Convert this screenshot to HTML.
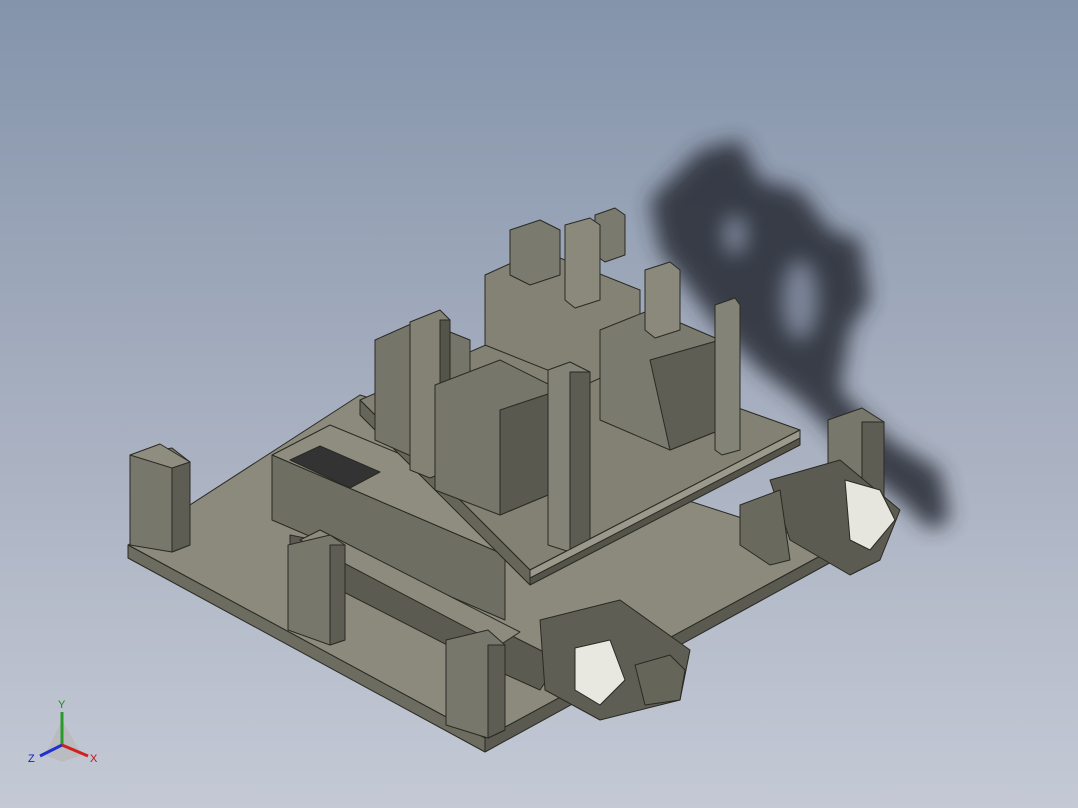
<!DOCTYPE html>
<html><head><style>
html,body{margin:0;padding:0;width:1078px;height:808px;overflow:hidden}
body{background:linear-gradient(180deg,#8494ab 0%,#a3acbd 45%,#c4c9d5 100%);font-family:"Liberation Sans",sans-serif}
svg{position:absolute;left:0;top:0}
</style></head><body>
<svg width="1078" height="808" viewBox="0 0 1078 808">
<defs><filter id="b" x="-30%" y="-30%" width="160%" height="160%"><feGaussianBlur stdDeviation="10"/></filter></defs>
<g filter="url(#b)" fill="#2b2f37" opacity="0.88">
<polygon points="700,150 740,140 760,180 800,190 830,230 860,240 870,300 850,330 840,390 860,410 890,440 940,470 950,520 930,530 900,500 860,470 830,430 800,400 760,370 720,330 690,290 660,250 650,200"/>
</g>
<g fill="#8e9aae" filter="url(#b)" opacity="0.8">
<ellipse cx="800" cy="300" rx="18" ry="40"/>
<ellipse cx="735" cy="235" rx="12" ry="20"/>
</g>
<g stroke="#2a2a24" stroke-width="1" stroke-linejoin="round">
<polygon points="128,545 360,395 835,548 485,738" fill="#8b8a7d"/>
<polygon points="128,545 485,738 485,752 128,558" fill="#6d6c60"/>
<polygon points="485,738 835,548 835,560 485,752" fill="#5b5a50"/>
<polygon points="130,455 172,448 190,462 190,545 172,552 130,545" fill="#78776b"/>
<polygon points="172,462 190,462 190,545 172,552" fill="#5e5d53"/>
<polygon points="130,455 160,444 190,462 172,468" fill="#8e8d80"/>
<polygon points="828,420 862,408 884,422 884,500 862,510 828,500" fill="#78776b"/>
<polygon points="862,422 884,422 884,500 862,510" fill="#5e5d53"/>
<polygon points="272,455 330,425 560,520 505,555" fill="#8e8d80"/>
<polygon points="272,455 505,555 505,620 272,520" fill="#6f6e62"/>
<polygon points="290,460 320,446 380,472 350,488" fill="#333"/>
<polygon points="360,400 520,330 800,430 530,570" fill="#828174"/>
<polygon points="360,400 530,570 530,585 360,415" fill="#66655a"/>
<polygon points="530,570 800,430 800,445 530,585" fill="#55544a"/>
<polygon points="375,340 420,320 470,340 470,440 420,460 375,440" fill="#76756a"/>
<polygon points="410,322 440,310 450,320 450,470 430,478 410,470" fill="#838275"/>
<polygon points="440,320 450,320 450,470 440,475" fill="#55544a"/>
<polygon points="435,385 500,360 560,390 560,490 500,515 435,490" fill="#77766a"/>
<polygon points="500,410 560,390 560,490 500,515" fill="#5a594f"/>
<polygon points="485,275 540,250 640,290 640,360 585,385 485,345" fill="#838275"/>
<polygon points="510,230 540,220 560,230 560,275 530,285 510,275" fill="#7b7a6e"/>
<polygon points="595,215 615,208 625,215 625,255 605,262 595,255" fill="#7b7a6e"/>
<polygon points="600,330 650,310 720,340 720,430 670,450 600,420" fill="#7b7a6e"/>
<polygon points="650,360 720,340 720,430 670,450" fill="#5f5e54"/>
<polygon points="645,270 670,262 680,270 680,330 655,338 645,330" fill="#8a897c"/>
<polygon points="565,225 590,218 600,225 600,300 575,308 565,300" fill="#8a897c"/>
<polygon points="548,370 570,362 590,372 590,545 570,552 548,545" fill="#848377"/>
<polygon points="570,372 590,372 590,545 570,552" fill="#5d5c52"/>
<polygon points="715,305 735,298 740,305 740,450 722,455 715,450" fill="#848377"/>
<polygon points="530,570 800,430 800,438 530,578" fill="#9a998c"/>
<polygon points="290,535 340,545 520,640 560,660 540,690 500,672 330,585 290,560" fill="#5c5b51"/>
<polygon points="300,540 500,645 520,632 320,530" fill="#8c8b7e"/>
<polygon points="288,545 330,535 345,545 345,640 330,645 288,630" fill="#78776b"/>
<polygon points="330,545 345,545 345,640 330,645" fill="#5e5d53"/>
<polygon points="446,640 488,630 505,645 505,730 488,738 446,725" fill="#78776b"/>
<polygon points="488,645 505,645 505,730 488,738" fill="#5e5d53"/>
<polygon points="540,620 620,600 690,650 680,700 600,720 545,690" fill="#5f5e54"/>
<polygon points="575,648 610,640 625,680 600,705 575,690" fill="#e8e8e0"/>
<polygon points="635,665 670,655 685,670 680,700 645,705" fill="#66655a"/>
<polygon points="770,480 840,460 900,510 880,560 850,575 790,540" fill="#5c5b51"/>
<polygon points="845,480 880,490 895,520 870,550 850,540" fill="#e6e6de"/>
<polygon points="740,505 780,490 790,560 770,565 740,545" fill="#6a695e"/>
</g>
<g font-family="Liberation Sans" font-size="11">
<polygon points="45,755 62,720 82,755 62,762" fill="#b8b8b8" opacity="0.7"/>
<line x1="62" y1="745" x2="62" y2="712" stroke="#2a9a2a" stroke-width="3"/>
<line x1="62" y1="745" x2="88" y2="756" stroke="#d02020" stroke-width="3"/>
<line x1="62" y1="745" x2="40" y2="756" stroke="#2030d0" stroke-width="3"/>
<text x="58" y="708" fill="#1a8a1a">Y</text>
<text x="90" y="762" fill="#c01010">X</text>
<text x="28" y="762" fill="#1020c0">Z</text>
</g>
</svg>
</body></html>
